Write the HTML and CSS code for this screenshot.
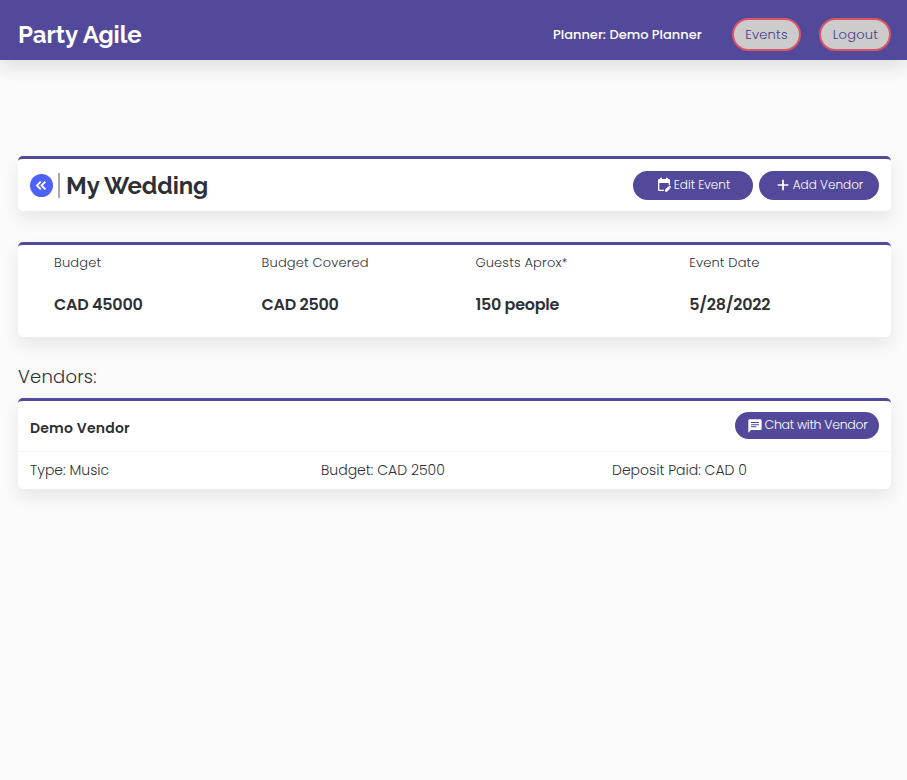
FILE: index.html
```
<!DOCTYPE html>
<html lang="en">
<head>
<meta charset="utf-8">
<title>Party Agile</title>
<link rel="stylesheet" href="styles.css">
</head>
<body>
<header class="navbar">
  <a class="brand">Party Agile</a>
  <nav class="nav-links">
    <span class="planner">Planner: Demo Planner</span>
    <a class="nav-btn events">Events</a>
    <a class="nav-btn logout">Logout</a>
  </nav>
</header>
<main class="page">
  <section class="card title-card">
    <a class="back" aria-label="Back"><svg viewBox="0 0 24 24"><path d="M11 6.500 5.500 12l5.500 5.500M17.500 6.500 12 12l5.500 5.500"/></svg></a>
    <h1 class="event-title">My Wedding</h1>
    <div class="actions">
      <a class="btn edit"><svg class="icon" viewBox="0 0 24 24"><path d="M19 3h-1V1h-3v2H9V1H6v2H5a2 2 0 0 0-2 2v14a2 2 0 0 0 2 2h7v-2H5V9h14v3h2V5a2 2 0 0 0-2-2zm3.200 11.300-1-1a1 1 0 0 0-1.400 0l-1 1 2.400 2.400 1-1a1 1 0 0 0 0-1.400zM13.500 19v3h3l4.700-4.700-2.900-2.900z"/></svg>Edit Event</a>
      <a class="btn add"><svg class="icon" viewBox="0 0 24 24"><path d="M20 13.300h-6.700V20h-2.600v-6.700H4v-2.600h6.700V4h2.600v6.700H20z"/></svg>Add Vendor</a>
    </div>
  </section>
  <section class="stats">
    <div class="stat"><div class="label">Budget</div><div class="value">CAD 45000</div></div>
    <div class="stat"><div class="label">Budget Covered</div><div class="value">CAD 2500</div></div>
    <div class="stat"><div class="label">Guests Aprox*</div><div class="value">150 people</div></div>
    <div class="stat"><div class="label">Event Date</div><div class="value">5/28/2022</div></div>
  </section>
  <h2 class="section-title">Vendors:</h2>
  <section class="card vendor">
    <div class="vendor-head">
      <h3 class="vendor-name">Demo Vendor</h3>
      <a class="btn chat"><svg class="icon" viewBox="0 0 24 24"><path fill-rule="evenodd" d="M4 2a2 2 0 0 0-2 2v18l4-4h14a2 2 0 0 0 2-2V4a2 2 0 0 0-2-2zM6 6h12v1.500H6zm0 3.200h12v1.600H6zM6 12.500h8V14H6z"/></svg>Chat with Vendor</a>
    </div>
    <div class="vendor-info">
      <span>Type: Music</span><span>Budget: CAD 2500</span><span>Deposit Paid: CAD 0</span>
    </div>
  </section>
</main>
</body>
</html>
```
FILE: styles.css
```
*{box-sizing:border-box}
body{margin:0;min-height:780px;background:#fafafa;color:#2d3136;font-family:Poppins,"Liberation Sans",sans-serif;font-size:14px;font-weight:300;white-space:nowrap}
h1,h2,h3{margin:0}
.navbar{height:60px;padding:8px 16px 0 18px;display:flex;align-items:center;justify-content:space-between;background:#53499b;color:#fff;box-shadow:0 8px 16px rgba(0,0,0,.1)}
.brand{font:700 24px/30px Raleway,Lato,sans-serif;padding-top:2px}
.nav-links{display:flex;align-items:center}
.planner{font-size:13px;font-weight:500;width:149px;margin-right:30px;padding-top:1px}
.nav-btn{display:flex;align-items:center;justify-content:center;height:33px;border:2px solid #dc5564;border-radius:17px;background:#ccc;color:#463b86;font-size:13px;letter-spacing:.25px;padding-top:1px}
.events{width:69px;margin-right:18px}
.logout{width:72px;padding-left:1px}
.page{padding:96px 16px 0 18px}
.card{background:#fff;border-top:3px solid #53499b;border-radius:5px;box-shadow:0 8px 16px rgba(0,0,0,.08)}
.title-card{height:55.400px;padding:0 12px;display:flex;align-items:center}
.back{width:23px;height:23px;border-radius:50%;background:#4d61fc;display:flex;align-items:center;justify-content:center}
.back svg{width:17px;height:17px;fill:none;stroke:#fff;stroke-width:2.600}
.event-title{margin-left:5px;padding-left:6px;border-left:2px solid #aaa;font:700 24px/24px Raleway,Lato,sans-serif;letter-spacing:-.08px;padding-top:1px;height:25px}
.actions{margin-left:auto;display:flex;gap:6px}
.btn{display:flex;align-items:center;justify-content:center;border-radius:15px;background:#53499b;color:#fff;font-size:12px;gap:2px}
.edit,.add{width:120px;height:29px}
.icon{width:16px;height:16px;fill:#fff}
.stats{margin-top:30.200px;height:95.500px;display:grid;grid-template-columns:231.600px repeat(3,1fr);border-radius:5px;box-shadow:0 8px 16px rgba(0,0,0,.08)}
.stat{background:#fff;border-top:3px solid #53499b;padding:8px 12px}
.stat:first-child{padding-left:36px;border-radius:5px 0 0 5px}
.stat:last-child{border-radius:0 5px 5px 0}
.label{font-size:13px;line-height:20px;letter-spacing:.16px}
.value{margin-top:20px;font-size:16px;font-weight:600;line-height:24px;letter-spacing:-.26px}
.section-title{margin-top:26px;font-size:18px;font-weight:300;line-height:27px;letter-spacing:.2px}
.vendor{margin-top:7.500px;height:91.500px}
.vendor-head{height:51px;padding:0 12px;display:flex;align-items:center;justify-content:space-between;border-bottom:1px solid #f5f8fb}
.vendor-name{font-size:14px;font-weight:600;letter-spacing:.22px;padding-top:6px}
.chat{width:144px;height:27px;font-size:12.500px;letter-spacing:-.3px;line-height:20px;padding-bottom:1px}
.chat .icon{margin-top:1px}
.vendor-info{padding:7.500px 12px;display:grid;grid-template-columns:291px 291px 1fr;line-height:22px}
```
